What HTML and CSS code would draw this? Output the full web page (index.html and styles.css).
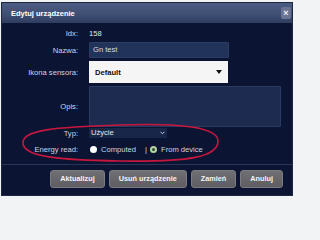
FILE: index.html
```html
<!DOCTYPE html>
<html lang="pl">
<head>
<meta charset="utf-8">
<title>Edytuj urządzenie</title>
<link rel="stylesheet" href="styles.css">
</head>
<body>
<div class="dialog">
  <div class="titlebar">
    <span class="title">Edytuj urządzenie</span>
    <span class="close">×</span>
  </div>
  <div class="form">
    <div class="row r-idx"><span class="label">Idx:</span><span class="value">158</span></div>
    <div class="row r-name"><span class="label">Nazwa:</span><div class="input">Gn test</div></div>
    <div class="row r-icon"><span class="label">Ikona sensora:</span>
      <div class="select-white"><span>Default</span><span class="tri"></span></div></div>
    <div class="row r-desc"><span class="label">Opis:</span><div class="textarea"></div></div>
    <div class="row r-type"><span class="label">Typ:</span>
      <div class="select-dark"><span>Użycie</span>
        <svg class="chev" width="5" height="4" viewBox="0 0 5 4"><path d="M0.5 0.8 L2.5 2.8 L4.5 0.8" fill="none" stroke="#c8cfe0" stroke-width="1"/></svg>
      </div></div>
    <div class="row r-energy"><span class="label">Energy read:</span>
      <div class="radios">
        <span class="radio"></span><span class="rtext">Computed</span>
        <span class="sep">|</span>
        <span class="radio checked"></span><span class="rtext">From device</span>
      </div></div>
  </div>
  <div class="buttons">
    <span class="btn">Aktualizuj</span>
    <span class="btn">Usuń urządzenie</span>
    <span class="btn">Zamień</span>
    <span class="btn">Anuluj</span>
  </div>
  <svg class="annot" width="299" height="202" viewBox="0 0 299 202">
    <path d="M 23 143 C 22 130, 55 127, 120 125 C 180 123, 218 127, 218 141 C 218 157, 190 162, 120 161 C 60 160, 23 157, 23 143 Z" fill="none" stroke="#c8173f" stroke-width="1.6"/>
  </svg>
</div>
</body>
</html>
```
FILE: styles.css
```css
html, body {
  margin: 0;
  padding: 0;
}
body {
  background: #f2f3f5;
  width: 299px;
  height: 202px;
  overflow: hidden;
  font-family: "Liberation Sans", Arial, sans-serif;
}
.dialog {
  position: relative;
  margin: 2px 0 0 1px;
  width: 290px;
  height: 192px;
  border: 1px solid #1d2742;
  background: #0b1533;
  display: flex;
  flex-direction: column;
}
.titlebar {
  height: 20px;
  background: linear-gradient(#4d5c82, #3e4d72 60%, #2f3d60);
  display: flex;
  align-items: center;
  justify-content: space-between;
  padding: 0 1px 0 9px;
}
.title {
  color: #ffffff;
  font-weight: bold;
  font-size: 7.5px;
}
.close {
  width: 10px;
  height: 12px;
  background: #6a7392;
  border-radius: 2px;
  color: #f0f0f4;
  font-size: 9px;
  font-weight: bold;
  line-height: 12px;
  text-align: center;
}
.form {
  display: flex;
  flex-direction: column;
  padding-top: 4px;
}
.row {
  display: grid;
  grid-template-columns: 76px auto;
  column-gap: 11px;
  align-items: center;
}
.label {
  text-align: right;
  color: #cdd3e3;
  font-size: 7.6px;
}
.value {
  color: #e2e6f0;
  font-size: 7.6px;
}
.r-idx { height: 12px; }
.r-name { height: 16px; margin-top: 3px; }
.r-icon { height: 22px; margin-top: 3px; }
.r-desc { height: 41px; margin-top: 3px; }
.r-type { height: 10px; margin-top: 1px; }
.r-energy { height: 12px; margin-top: 5px; }
.input {
  width: 135px;
  height: 14px;
  background: #22335a;
  border: 1px solid #2b3c64;
  border-radius: 1px;
  color: #d6dbe6;
  font-size: 7.6px;
  line-height: 14px;
  padding-left: 3px;
}
.select-white {
  width: 127px;
  height: 22px;
  background: #f5f5f5;
  color: #111;
  font-weight: bold;
  font-size: 7.6px;
  display: flex;
  align-items: center;
  justify-content: space-between;
  padding: 0 6px;
}
.tri {
  width: 0;
  height: 0;
  border-left: 3px solid transparent;
  border-right: 3px solid transparent;
  border-top: 4px solid #111;
}
.textarea {
  width: 190px;
  height: 39px;
  background: #1d2b50;
  border: 1px solid #2a3a60;
  border-radius: 1px;
}
.select-dark {
  width: 74px;
  height: 10px;
  background: #18264a;
  color: #e2e6ef;
  font-size: 7.6px;
  line-height: 10px;
  display: flex;
  align-items: center;
  justify-content: space-between;
  padding: 0 2px;
}
.radios {
  display: flex;
  align-items: center;
  font-size: 7.6px;
  color: #cdd3e3;
  padding-left: 1px;
}
.radio {
  width: 7px;
  height: 7px;
  border-radius: 50%;
  background: #ffffff;
  box-sizing: border-box;
}
.radio.checked {
  background: #2f4a2e;
  border: 2px solid #b7d1a6;
  margin-left: 3px;
}
.rtext { margin-left: 4px; }
.sep {
  margin-left: 9px;
  color: #cdd3e3;
}
.buttons {
  margin-top: auto;
  border-top: 1px solid #28345a;
  height: 31px;
  display: flex;
  justify-content: flex-end;
  align-items: flex-start;
  gap: 4px;
  padding: 5px 9px 0 0;
  box-sizing: border-box;
}
.btn {
  height: 16px;
  line-height: 16px;
  padding: 0 9px;
  background: linear-gradient(#707074, #5e5e62);
  border: 1px solid #7a7a80;
  border-radius: 3px;
  color: #f4f4f4;
  font-weight: bold;
  font-size: 7.3px;
}
.annot {
  position: absolute;
  left: -2px;
  top: -3px;
  pointer-events: none;
}
```
